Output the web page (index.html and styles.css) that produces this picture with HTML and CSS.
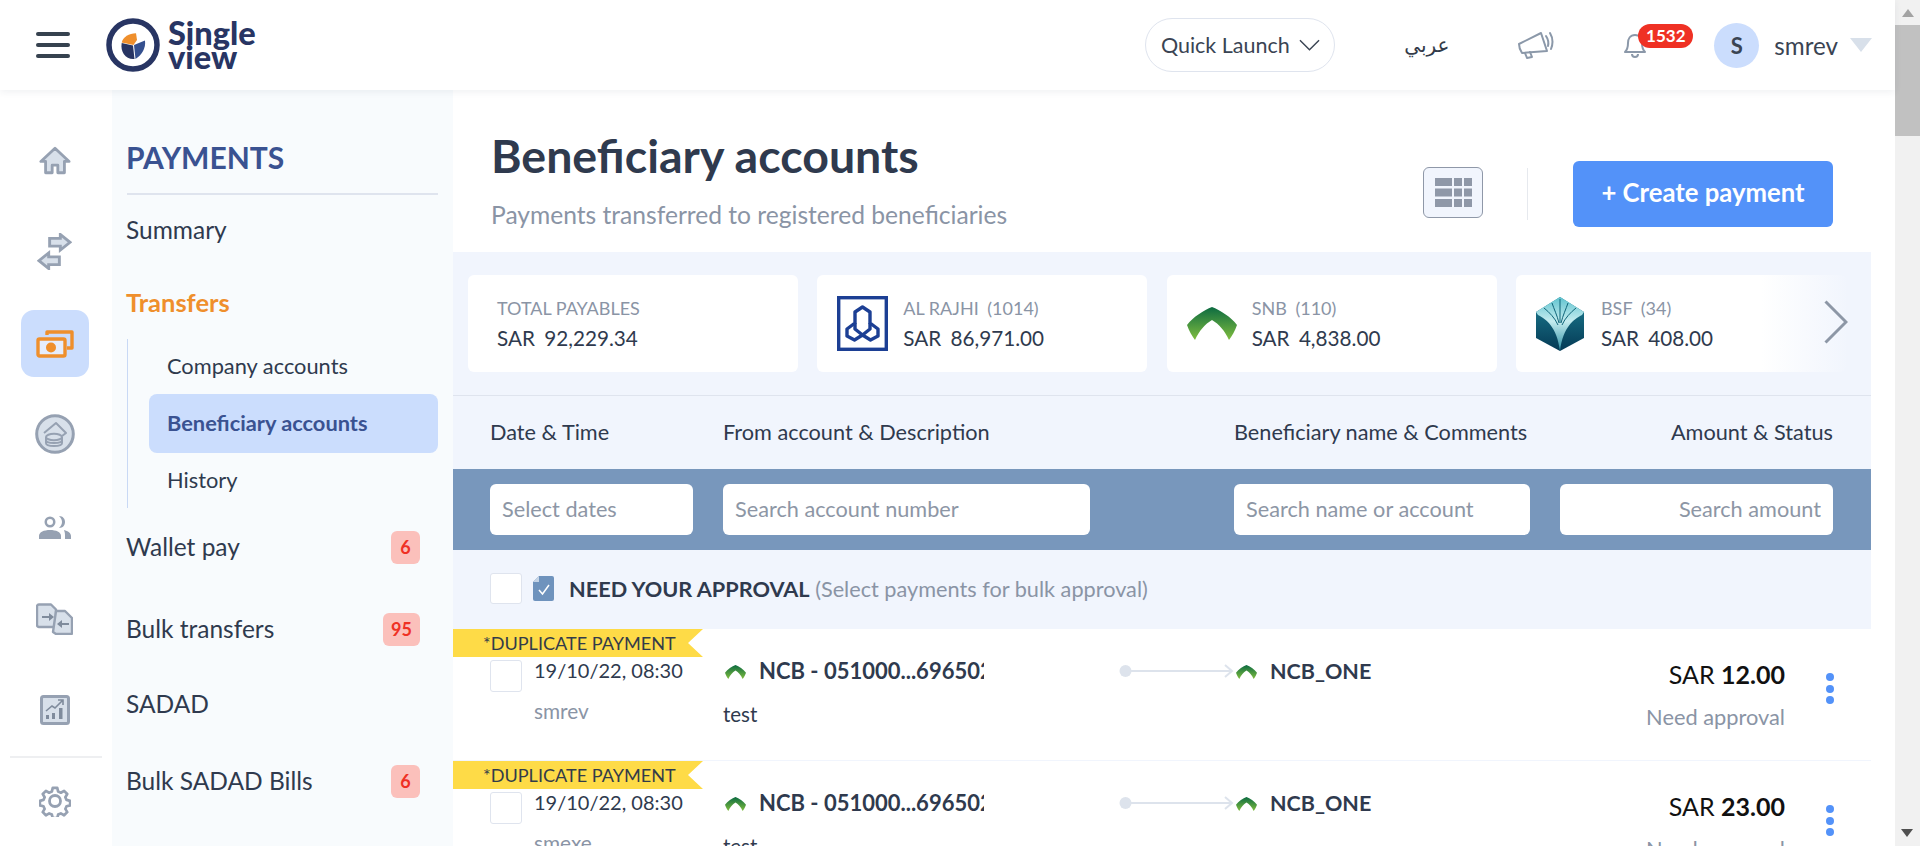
FILE: index.html
```html
<!DOCTYPE html>
<html lang="en">
<head>
<meta charset="utf-8">
<title>Beneficiary accounts</title>
<link rel="stylesheet" href="styles.css">
</head>
<body>
<svg class="defs" width="0" height="0" aria-hidden="true">
  <defs>
    <linearGradient id="snbGrad" x1="0" y1="0" x2="0" y2="1">
      <stop offset="0" stop-color="#0c6b41"/><stop offset="1" stop-color="#80bd3e"/>
    </linearGradient>
    <linearGradient id="bsfGrad" x1="0" y1="0" x2="0" y2="1">
      <stop offset="0" stop-color="#1d7f93"/><stop offset="1" stop-color="#053a55"/>
    </linearGradient>
    <linearGradient id="bsfFan" x1="0" y1="0" x2="0" y2="1">
      <stop offset="0" stop-color="#5fc3cf"/><stop offset=".45" stop-color="#c5ecef"/><stop offset="1" stop-color="#2b8ea2"/>
    </linearGradient>
    <symbol id="snb" viewBox="0 0 50 33">
      <path fill="url(#snbGrad)" d="M25 0C33 3 44 10 50 18C48 24 45 29 42 33C38 24 32 17 25 13C18 17 12 24 8 33C5 29 2 24 0 18C6 10 17 3 25 0Z"/>
    </symbol>
  </defs>
</svg>
<div class="window">
  <div class="page">
    <header class="topbar">
      <button class="burger" aria-label="Menu"><span></span><span></span><span></span></button>
      <div class="logo">
        <svg class="logo-mark" viewBox="0 0 54 54">
          <circle cx="27" cy="27" r="24" fill="none" stroke="#283563" stroke-width="5.5"/>
          <path fill="#283563" d="M15.700 25L27 27.500 28.500 41C20 42 14 34 15.700 25Z"/>
          <path fill="#ef8f2c" d="M15.700 24.500C17 19 23 15.500 30 15.300L31 22 27.500 27Z"/>
          <path fill="#35508f" d="M28 27L39 22.500C40 30 36 37 29.500 41Z"/>
        </svg>
        <div class="logo-text">Single<br>view</div>
      </div>
      <div class="top-actions">
        <div class="quick">Quick Launch
          <svg class="quick-chev" viewBox="0 0 22 12"><path d="M1 1l10 10L21 1" fill="none" stroke="#3a4453" stroke-width="1.5"/></svg>
        </div>
        <div class="lang" lang="ar">عربي</div>
        <svg class="mega" viewBox="0 0 38 28"><g fill="none" stroke="#8b98a9" stroke-width="2" stroke-linejoin="round" stroke-linecap="round"><path d="M2 13L24 2l6 18-25 2c-2-3-3-6-3-9z"/><path d="M8 22l2 5 5-1-2-5"/><path d="M29 5c2 3 3 6 2 10"/><path d="M33 2c3 5 3 11 1 16"/></g></svg>
        <div class="bell-wrap">
          <svg class="bell" viewBox="0 0 24 26"><g fill="none" stroke="#8b98a9" stroke-width="2" stroke-linejoin="round"><path d="M12 3c-5 0-7 4-7 8 0 5-1 7-3 9h20c-2-2-3-4-3-9 0-4-2-8-7-8z"/><path d="M9 22c0 4 6 4 6 0"/></g></svg>
          <span class="bell-count">1532</span>
        </div>
        <div class="avatar">S</div>
        <div class="username">smrev</div>
        <svg class="user-caret" viewBox="0 0 22 14"><path d="M0 0h22L11 14z" fill="#d8e0ea"/></svg>
      </div>
    </header>

    <div class="shell">
      <nav class="rail">
        <div class="rail-slot">
          <svg class="ic" viewBox="0 0 34 30"><path d="M17 2L2 16h5v12h7v-8h6v8h7V16h5z" fill="#d8e0ea" stroke="#96a1b2" stroke-width="3" stroke-linejoin="round"/></svg>
        </div>
        <div class="rail-slot">
          <svg class="ic ic-tr" viewBox="0 0 36 38"><g fill="#d8e0ea" stroke="#96a1b2" stroke-width="3" stroke-linejoin="miter"><path d="M13 5.500h11V1.500l10 8-10 8v-4H13z"/><path d="M23 24.500H12v-4l-10 8 10 8v-4h11z"/></g></svg>
        </div>
        <div class="rail-slot">
          <div class="rail-active">
            <svg class="ic ic-money" viewBox="0 0 38 28"><g fill="none" stroke="#ef8f2c" stroke-width="3.400"><rect x="2" y="9" width="27" height="17" rx="1.500" fill="#e6edfc"/><path d="M11 5V2h25v16h-5" stroke-linejoin="round"/></g><circle cx="15" cy="17.500" r="5" fill="#ef8f2c"/></svg>
          </div>
        </div>
        <div class="rail-slot">
          <svg class="ic ic-coins" viewBox="0 0 40 40"><circle cx="20" cy="20" r="18.300" fill="#d8e0ea" stroke="#96a1b2" stroke-width="3"/><g fill="none" stroke="#96a1b2" stroke-width="2" stroke-linejoin="round"><path d="M9 19L21 9l10 10-4 3"/><ellipse cx="19" cy="23" rx="8" ry="3.200"/><path d="M11 23v3c0 2 4 3 8 3s8-1 8-3v-3"/><path d="M11 26v3c0 2 4 3 8 3s8-1 8-3v-3"/></g></svg>
        </div>
        <div class="rail-slot rail-shift">
          <svg class="ic ic-users" viewBox="0 0 34 25"><g fill="#96a1b2"><path d="M12 1.500a5.500 5.500 0 1 1 0 11 5.500 5.500 0 0 1 0-11zm0 2.500a3 3 0 1 0 0 6 3 3 0 0 0 0-6z"/><path d="M1 24v-3c0-4 5-6 11-6s11 2 11 6v3z" /><path d="M21 1c4 0 6 3 6 6s-2 6-6 6c2-2 3-4 3-6s-1-4-3-6z"/><path d="M26 15c4 1 7 3 7 6v3h-6v-4c0-2-.5-3.500-1-5z"/></g></svg>
        </div>
        <div class="rail-slot">
          <svg class="ic ic-bulk" viewBox="0 0 37 32"><g stroke="#96a1b2" stroke-width="2.400" stroke-linejoin="round"><path d="M3 1.500h12l5 5V24H3a2 2 0 0 1-2-2V3a2 2 0 0 1 2-1.500z" fill="#d8e0ea"/><path d="M20 8h9l7 7v15a1 1 0 0 1-1 1H20l-3-2z" fill="#d8e0ea" stroke="#96a1b2"/></g><path d="M6 13h7v-3l5 4-5 4v-3H6z" fill="#7f8b9c"/><path d="M33 20h-7v-3l-5 4 5 4v-3h7z" fill="#7f8b9c"/></svg>
        </div>
        <div class="rail-slot">
          <svg class="ic ic-chart" viewBox="0 0 30 30"><rect x="1.500" y="1.500" width="27" height="27" rx="2" fill="#d8e0ea" stroke="#96a1b2" stroke-width="3"/><g fill="#7f8b9c"><rect x="6" y="20" width="3" height="4"/><rect x="12" y="18" width="3" height="6"/><rect x="19" y="13" width="3.500" height="11"/></g><path d="M6 16l6-5 3 2 8-8M18 5h5v5" fill="none" stroke="#7f8b9c" stroke-width="1.600"/></svg>
        </div>
        <div class="rail-rule"></div>
        <div class="rail-slot">
          <svg class="ic ic-gear" viewBox="0 0 32 32"><circle cx="16" cy="16" r="5.500" fill="none" stroke="#96a1b2" stroke-width="2.800"/><path d="M13.500 1.500h5l1 4 3 1.300 3.600-2.100 3.500 3.500-2.100 3.600 1.300 3 4 1v5l-4 1-1.300 3 2.100 3.600-3.500 3.500-3.600-2.100-3 1.300-1 4h-5l-1-4-3-1.300-3.600 2.100-3.500-3.500 2.100-3.600-1.300-3-4-1v-5l4-1 1.300-3-2.100-3.600 3.500-3.500 3.600 2.100 3-1.300z" transform="translate(1.600 1.600) scale(.9)" fill="none" stroke="#96a1b2" stroke-width="3" stroke-linejoin="round"/></svg>
        </div>
      </nav>

      <aside class="side">
        <h2 class="side-title">PAYMENTS</h2>
        <div class="side-item">Summary</div>
        <div class="side-item side-current">Transfers</div>
        <div class="side-sub">
          <div class="sub-item">Company accounts</div>
          <div class="sub-item sub-active">Beneficiary accounts</div>
          <div class="sub-item">History</div>
        </div>
        <div class="side-item side-wallet">Wallet pay <span class="count">6</span></div>
        <div class="side-item side-bulk">Bulk transfers <span class="count">95</span></div>
        <div class="side-item side-sadad">SADAD</div>
        <div class="side-item side-bills">Bulk SADAD Bills <span class="count">6</span></div>
      </aside>

      <main class="main">
        <section class="head">
          <div>
            <h1 class="title">Beneficiary accounts</h1>
            <p class="subtitle">Payments transferred to registered beneficiaries</p>
          </div>
          <div class="head-tools">
            <div class="grid-btn">
              <svg class="grid-ic" viewBox="0 0 37 29"><g fill="#8f98a8"><rect width="17" height="8"/><rect x="19" width="8" height="8"/><rect x="29" width="8" height="8"/><rect y="10.500" width="17" height="8"/><rect x="19" y="10.500" width="8" height="8"/><rect x="29" y="10.500" width="8" height="8"/><rect y="21" width="17" height="8"/><rect x="19" y="21" width="8" height="8"/><rect x="29" y="21" width="8" height="8"/></g></svg>
            </div>
            <div class="tool-rule"></div>
            <button class="create">+ Create payment</button>
          </div>
        </section>

        <section class="stats">
          <div class="stat">
            <div class="stat-text"><div class="stat-label">TOTAL PAYABLES</div><div class="stat-value">SAR <span class="gap">92,229.34</span></div></div>
          </div>
          <div class="stat">
            <svg class="bank bank-rajhi" viewBox="0 0 51 55"><rect x="1.700" y="1.700" width="47.600" height="51.600" fill="#fff" stroke="#1c3f94" stroke-width="3.400"/><g fill="none" stroke="#1c3f94" stroke-width="3.400" stroke-linejoin="round"><path d="M25.500 11L33 16V27L41 33V40L33.500 44 25.500 39 17.500 44 10 40V33L18 27V16Z"/><path d="M18 27v6l7.500 6 7.500-6v-6"/></g></svg>
            <div class="stat-text"><div class="stat-label">AL RAJHI <span class="gap">(1014)</span></div><div class="stat-value">SAR <span class="gap">86,971.00</span></div></div>
          </div>
          <div class="stat">
            <svg class="bank bank-snb"><use href="#snb"/></svg>
            <div class="stat-text"><div class="stat-label">SNB <span class="gap">(110)</span></div><div class="stat-value">SAR <span class="gap">4,838.00</span></div></div>
          </div>
          <div class="stat">
            <svg class="bank bank-bsf" viewBox="0 0 48 54"><path d="M24 0l24 15v26L24 54 0 41V15z" fill="url(#bsfGrad)"/><path d="M24 0l24 15-2 3C38 22 27 30 24 54 21 30 10 22 2 18L0 15z" fill="url(#bsfFan)"/><g fill="none" stroke="#0f6478" stroke-width="1"><path d="M24 2v24M16 6c2 6 5 12 7 20M32 6c-2 6-5 12-7 20M8 11c5 4 11 10 14 17M40 11c-5 4-11 10-14 17"/></g></svg>
            <div class="stat-text"><div class="stat-label">BSF <span class="gap">(34)</span></div><div class="stat-value">SAR <span class="gap">408.00</span></div></div>
          </div>
          <div class="stat-fade"></div>
          <svg class="stat-next" viewBox="0 0 24 44"><path d="M1.500 1.500L22 22 1.500 42.500" fill="none" stroke="#8d97a6" stroke-width="3"/></svg>
        </section>

        <section class="cols">
          <div>Date &amp; Time</div>
          <div>From account &amp; Description</div>
          <div>Beneficiary name &amp; Comments</div>
          <div class="end">Amount &amp; Status</div>
        </section>

        <section class="filters">
          <input class="filter f-date" placeholder="Select dates">
          <input class="filter f-acct" placeholder="Search account number">
          <input class="filter f-name" placeholder="Search name or account">
          <input class="filter f-amt" placeholder="Search amount">
        </section>

        <section class="approval">
          <span class="check"></span>
          <svg class="doc" viewBox="0 0 21 25"><path d="M6 0h13a2 2 0 0 1 2 2v21a2 2 0 0 1-2 2H2a2 2 0 0 1-2-2V6z" fill="#6f93bd"/><path d="M0 6h6V0z" fill="#c5d4e6"/><path d="M6 14l3.500 4L16 9" fill="none" stroke="#fff" stroke-width="1.500"/></svg>
          <div class="approval-text"><strong>NEED YOUR APPROVAL</strong> <span>(Select payments for bulk approval)</span></div>
        </section>

        <article class="row">
          <div class="ribbon">*DUPLICATE PAYMENT</div>
          <div class="row-grid">
            <div class="cell-date">
              <span class="check check-row"></span>
              <div><div class="date">19/10/22, 08:30</div><div class="who">smrev</div></div>
            </div>
            <div class="cell-from">
              <div>
                <div class="acct"><svg class="mini"><use href="#snb"/></svg><span class="acct-no">NCB - 051000...696502</span></div>
                <div class="desc">test</div>
              </div>
              <div class="link"><svg viewBox="0 0 115 16"><circle cx="6.500" cy="8" r="6" fill="#dde3ec"/><path d="M12 8h101M106 2l7 6-7 6" fill="none" stroke="#dde3ec" stroke-width="2"/></svg></div>
            </div>
            <div class="cell-to"><svg class="mini mini-to"><use href="#snb"/></svg><span class="to-name">NCB_ONE</span></div>
            <div class="cell-amt">
              <div class="amt-block"><div class="amt">SAR <b>12.00</b></div><div class="state">Need approval</div></div>
              <div class="dots"><i></i><i></i><i></i></div>
            </div>
          </div>
        </article>

        <article class="row">
          <div class="ribbon">*DUPLICATE PAYMENT</div>
          <div class="row-grid">
            <div class="cell-date">
              <span class="check check-row"></span>
              <div><div class="date">19/10/22, 08:30</div><div class="who">smexe</div></div>
            </div>
            <div class="cell-from">
              <div>
                <div class="acct"><svg class="mini"><use href="#snb"/></svg><span class="acct-no">NCB - 051000...696502</span></div>
                <div class="desc">test</div>
              </div>
              <div class="link"><svg viewBox="0 0 115 16"><circle cx="6.500" cy="8" r="6" fill="#dde3ec"/><path d="M12 8h101M106 2l7 6-7 6" fill="none" stroke="#dde3ec" stroke-width="2"/></svg></div>
            </div>
            <div class="cell-to"><svg class="mini mini-to"><use href="#snb"/></svg><span class="to-name">NCB_ONE</span></div>
            <div class="cell-amt">
              <div class="amt-block"><div class="amt">SAR <b>23.00</b></div><div class="state">Need approval</div></div>
              <div class="dots"><i></i><i></i><i></i></div>
            </div>
          </div>
        </article>
      </main>
    </div>
  </div>

  <div class="scrollbar">
    <svg class="sb-arrow" viewBox="0 0 12 8"><path d="M6 0l6 8H0z" fill="#a3a3a3"/></svg>
    <div class="sb-thumb"></div>
    <svg class="sb-arrow sb-down" viewBox="0 0 12 8"><path d="M0 0h12L6 8z" fill="#505050"/></svg>
  </div>
</div>
</body>
</html>
```

FILE: styles.css
```css
* { box-sizing: border-box; }
html, body { margin: 0; height: 100%; overflow: hidden; }
body { font-family: Lato, "Noto Sans", sans-serif; color: #2f3a4e; background: #fff; }
.defs { position: absolute; }
h1, h2, p { margin: 0; }

.window { display: flex; height: 846px; overflow: hidden; }
.page { width: 1895px; display: flex; flex-direction: column; }

.topbar { height: 90px; flex: none; display: flex; align-items: center; padding-left: 36px; background: #fff; box-shadow: 0 2px 7px rgba(40, 60, 90, .07); position: relative; z-index: 2; }
.burger { width: 34px; height: 26px; padding: 0; border: 0; background: none; display: flex; flex-direction: column; justify-content: space-between; }
.burger span { height: 4px; border-radius: 2px; background: #36424f; }
.logo { display: flex; align-items: center; margin-left: 36px; gap: 8px; }
.logo-mark { width: 54px; height: 54px; }
.logo-text { font-size: 32.500px; line-height: 24px; font-weight: 900; color: #283563; }
.top-actions { margin-left: auto; display: flex; align-items: center; padding-right: 23px; }
.quick { width: 190px; height: 54px; border: 1px solid #dfe4ee; border-radius: 27px; display: flex; align-items: center; justify-content: center; gap: 9px; font-size: 21.500px; color: #3a4453; }
.quick-chev { width: 21px; height: 12px; }
.lang { width: 44px; margin-left: 69px; font-family: "DejaVu Sans", sans-serif; font-size: 20px; color: #333b49; text-align: center; }
.mega { width: 38px; height: 28px; margin-left: 69px; }
.bell-wrap { position: relative; width: 24px; height: 26px; margin-left: 68px; }
.bell { width: 24px; height: 26px; display: block; }
.bell-count { position: absolute; left: 15px; top: -8px; width: 55px; height: 24px; border-radius: 12px; background: #ef3124; color: #fff; font-size: 17px; font-weight: 700; line-height: 24px; text-align: center; }
.avatar { width: 45px; height: 45px; margin-left: 67px; border-radius: 50%; background: #cbddfd; display: flex; align-items: center; justify-content: center; font-size: 22px; font-weight: 700; color: #3a4453; }
.username { margin-left: 15px; font-size: 24.200px; color: #3a4453; }
.user-caret { width: 22px; height: 14px; margin-left: 12px; }

.shell { flex: 1; display: flex; min-height: 0; }

.rail { width: 112px; flex: none; padding-top: 26px; display: flex; flex-direction: column; align-items: center; }
.rail-slot { height: 91px; flex: none; width: 100%; padding-right: 3px; padding-bottom: 2px; display: flex; align-items: center; justify-content: center; }
.rail-slot:nth-child(3) { padding-bottom: 0; }
.rail-shift { margin-top: 3px; }
.rail-active { width: 68px; height: 67px; border-radius: 13px; background: #cbddfd; display: flex; align-items: center; justify-content: center; }
.rail-rule { width: 92px; height: 2px; background: #eeeff1; flex: none; margin-bottom: -2px; }
.ic { width: 32px; height: 29px; }
.ic-tr { width: 35px; height: 37px; }
.ic-money { width: 38px; height: 28px; }
.ic-coins { width: 40px; height: 40px; }
.ic-users { width: 34px; height: 25px; }
.ic-bulk { width: 37px; height: 32px; }
.ic-chart { width: 30px; height: 30px; }
.ic-gear { width: 32px; height: 32px; }

.side { width: 341px; flex: none; padding: 0 15px; background: #f8fbfd; }
.side-title { height: 105px; padding-top: 49px; border-bottom: 2px solid #dfe4ee; font-size: 30px; line-height: 36px; font-weight: 700; color: #3a5291; text-indent: -1px; }
.side-item { height: 72px; display: flex; align-items: center; justify-content: space-between; padding: 0 18px 3px 0; font-size: 24.500px; color: #2f3a4e; text-indent: -1px; }
.side-current { color: #ef8f2c; font-weight: 700; font-size: 25.500px; }
.side-sub { border-left: 1px solid #c9d9f5; padding-left: 21px; }
.sub-item { height: 55px; display: flex; align-items: center; padding: 0 0 2px 18px; font-size: 21.800px; color: #2f3a4e; }
.sub-active { height: 59px; border-radius: 8px; background: #cbddfd; color: #3a5291; font-weight: 700; }
.side-wallet { height: 78px; padding-bottom: 1px; }
.side-bulk { height: 86px; padding-bottom: 1px; }
.side-sadad { height: 64px; padding-bottom: 1px; }
.side-bills { height: 90px; padding-bottom: 1px; }
.count { min-width: 29px; height: 33px; margin-top: 1px; padding: 0 8px; border-radius: 6px; background: #fbc0bb; color: #ef3124; font-size: 18px; font-weight: 700; line-height: 33px; text-align: center; text-indent: 0; }

.main { width: 1418px; flex: none; overflow: hidden; }

.head { height: 162px; padding: 39px 38px 0; display: flex; justify-content: space-between; background: #fff; }
.title { font-size: 46.500px; line-height: 52px; font-weight: 700; color: #2f3a4e; }
.subtitle { margin-top: 19px; font-size: 24.600px; line-height: 30px; color: #8a94a5; }
.head-tools { display: flex; align-items: center; height: 66px; margin-top: 32px; }
.grid-btn { width: 60px; height: 51px; margin-top: -3px; border: 1px solid #8f98a8; border-radius: 6px; background: #f1f5fd; display: flex; align-items: center; justify-content: center; }
.grid-ic { width: 37px; height: 29px; }
.tool-rule { width: 1px; height: 52px; margin: 0 45px 0 44px; background: #e6e9ee; }
.create { width: 260px; height: 66px; padding: 0 0 4px; border: 0; border-radius: 6px; background: #5392f9; color: #fff; font-family: inherit; font-size: 25.700px; font-weight: 700; }

.stats { position: relative; height: 144px; padding: 23px 0 0 15px; display: flex; gap: 19.330px; overflow: hidden; background: #f1f5fd; border-bottom: 1px solid #dfe4ee; }
.stat { width: 330px; height: 97px; flex: none; display: flex; align-items: center; padding-left: 20px; border-radius: 6px; background: #fff; }
.stat-text { display: flex; flex-direction: column; gap: 4px; padding-top: 1px; }
.stat:first-child .stat-text { padding-left: 9px; }
.stat-label { font-size: 18px; line-height: 24px; color: #8a94a5; }
.stat-value { font-size: 20.700px; line-height: 28px; color: #2f3a4e; }
.gap { margin-left: 4px; }
.bank { flex: none; }
.bank-rajhi { width: 51px; height: 55px; margin-right: 15px; }
.bank-snb { width: 50px; height: 33px; margin-right: 15px; }
.bank-bsf { width: 48px; height: 54px; margin-right: 17px; }
.stat-fade { position: absolute; right: 0; top: 0; width: 110px; height: 143px; background: linear-gradient(90deg, rgba(241, 245, 253, 0), #f1f5fd 80%); }
.stat-next { position: absolute; left: 1371px; top: 48px; width: 24px; height: 44px; }

.cols, .filters { display: grid; grid-template-columns: 233px 511px 326px 273px; padding-left: 37px; }
.cols { height: 73px; padding-bottom: 2px; align-items: center; background: #f1f5fd; font-size: 21.700px; color: #2f3a4e; }
.end { text-align: right; }
.filters { height: 81px; padding-top: 15px; background: #7897bc; }
.filter { height: 51px; border: 0; border-radius: 6px; padding: 0 12px 2px; background: #fff; font: inherit; font-size: 21.700px; color: #2f3a4e; }
.filter::placeholder { color: #8d96a5; opacity: 1; }
.f-date { width: 203px; }
.f-acct { width: 367px; }
.f-name { width: 296px; }
.f-amt { width: 273px; text-align: right; }

.approval { height: 79px; padding: 0 0 2px 37px; display: flex; align-items: center; background: #f1f5fd; }
.check { display: block; flex: none; width: 32px; height: 31px; border: 1px solid #dfe4ee; border-radius: 3px; background: #fff; }
.doc { width: 21px; height: 25px; margin-left: 11px; }
.approval-text { margin-left: 15px; font-size: 21.700px; color: #8a94a5; }
.approval-text strong { font-weight: 700; color: #2f3a4e; }

.row { height: 132px; border-bottom: 1px solid #f1f5fd; background: #fff; }
.ribbon { width: 250px; height: 28px; padding-left: 30px; background: #fedb47; clip-path: polygon(0 0, 100% 0, calc(100% - 15px) 50%, 100% 100%, 0 100%); font-size: 18.100px; line-height: 28px; color: #333b49; }
.row-grid { display: grid; grid-template-columns: 233px 511px 326px 273px; padding-left: 37px; }
.cell-date { display: flex; gap: 12px; }
.check-row { height: 32px; margin-top: 3px; }
.date { font-size: 20px; line-height: 26px; color: #2f3a4e; }
.who { margin-top: 16px; font-size: 20.800px; line-height: 24px; color: #8a94a5; }
.cell-from { display: flex; justify-content: space-between; }
.acct { display: flex; align-items: center; gap: 13px; height: 26px; margin-top: 2px; width: 261px; overflow: hidden; }
.mini { width: 21px; height: 14px; flex: none; margin-left: 2px; }
.acct-no { font-size: 22px; line-height: 26px; padding-bottom: 3px; font-weight: 700; white-space: nowrap; color: #2f3a4e; }
.desc { margin-top: 16px; font-size: 20.500px; line-height: 26px; color: #2f3a4e; }
.link { width: 115px; margin-top: 6px; }
.link svg { display: block; width: 115px; height: 16px; }
.cell-to { display: flex; align-items: center; align-self: start; height: 26px; margin-top: 2px; gap: 13px; }
.mini-to { margin-left: 2px; }
.to-name { font-size: 21.500px; line-height: 26px; padding-bottom: 3px; font-weight: 700; color: #2f3a4e; }
.cell-amt { display: flex; justify-content: flex-end; }
.amt-block { text-align: right; margin-right: 41px; white-space: nowrap; }
.amt { margin-top: 3px; font-size: 25px; line-height: 28px; color: #111; }
.amt b { font-weight: 700; }
.state { margin-top: 16px; font-size: 21.800px; line-height: 26px; color: #8a94a5; }
.dots { width: 8px; margin-top: 16px; margin-right: -1px; display: flex; flex-direction: column; gap: 3.500px; }
.dots i { width: 8px; height: 8px; border-radius: 50%; background: #5392f9; }

.scrollbar { width: 25px; flex: none; background: #f1f1f1; position: relative; }
.sb-arrow { display: block; width: 12px; height: 8px; margin: 9px auto 0; }
.sb-thumb { height: 111px; margin-top: 8px; background: #c1c1c1; }
.sb-down { position: absolute; left: 6px; bottom: 9px; margin: 0; }
```
